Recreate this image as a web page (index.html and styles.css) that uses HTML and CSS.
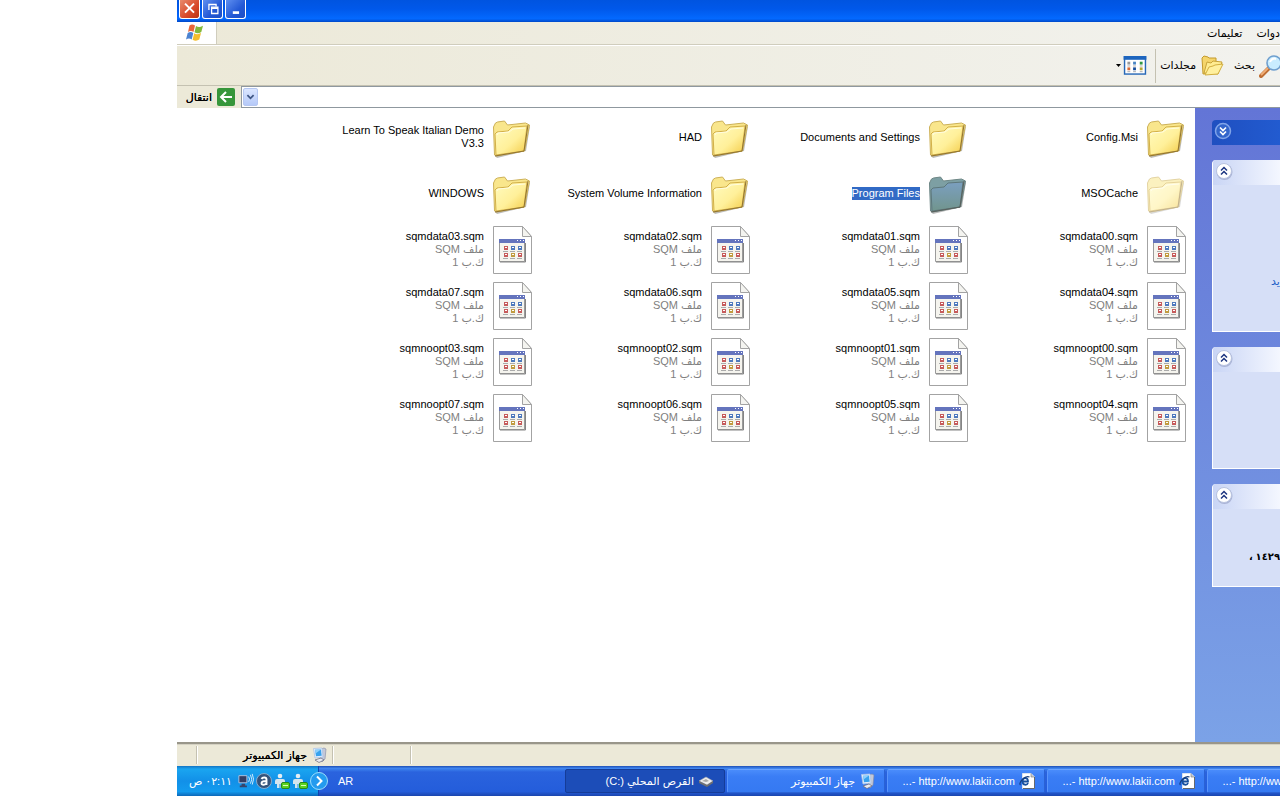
FILE: index.html
```html
<!DOCTYPE html>
<html lang="ar">
<head>
<meta charset="utf-8">
<title>القرص المحلي (C:)</title>
<link rel="stylesheet" href="styles.css">
</head>
<body>
<svg class="defs" aria-hidden="true">
  <defs>
    <linearGradient id="gold" x1="0" y1="0" x2="1" y2="1"><stop offset="0" stop-color="#fffbc0"/><stop offset=".55" stop-color="#fff09a"/><stop offset="1" stop-color="#f3ca45"/></linearGradient>
    <linearGradient id="steel" x1="0" y1="0" x2="0" y2="1"><stop offset="0" stop-color="#7b9fc0"/><stop offset="1" stop-color="#71958d"/></linearGradient>
    <symbol id="folder" viewBox="0 0 48 48">
      <path d="M7 42l28-5 6-24 1-1-4 25-29 7z" fill="#777" opacity=".5"/>
      <path d="M5.500 13l2-4 2-1 7-1 3 4 18-2 4 2-5 26-28 5-2-1z" fill="#f9e68c" stroke="#cdb158"/>
      <path d="M8 41L7 20l2-2 11-1 4-4 15-1-3 25z" fill="url(#gold)" stroke="#d3b048"/>
      <path d="M9 21l1-2 11-1 4-3 12-1" fill="none" stroke="#fffde0"/>
      <path d="M7 42l29-5 4-26" fill="none" stroke="#8f7332"/>
    </symbol>
    <symbol id="folder-selected" viewBox="0 0 48 48">
      <path d="M7 42l28-5 6-24 1-1-4 25-29 7z" fill="#888" opacity=".6"/>
      <path d="M5.500 13l2-4 2-1 7-1 3 4 18-2 4 2-5 26-28 5-2-1z" fill="#7d9fa3" stroke="#6d8685"/>
      <path d="M8 41L7 20l2-2 11-1 4-4 15-1-3 25z" fill="url(#steel)" stroke="#5d777b"/>
      <path d="M7 42l29-5 4-26" fill="none" stroke="#59605b"/>
    </symbol>
    <symbol id="file" viewBox="0 0 48 48">
      <path d="M5.500 .5h29l9 10v37h-38z" fill="#fff" stroke="#a3a3a3"/>
      <path d="M34.500 .5v10h9z" fill="#f4f4f0" stroke="#a3a3a3"/>
      <path d="M11.500 13.500h25v22h-25z" fill="#f5f4ee" stroke="#9b9b9b"/>
      <path d="M11 13h26v4H11z" fill="#6474bd"/>
      <path d="M29 14h1v1h-1zM32 14h1v1h-1zM35 14h1v1h-1z" fill="#fff"/>
      <path d="M12 36h25.500V17" fill="none" stroke="#858585"/>
      <g fill="#c65b5b"><path d="M16 20h4v4h-4zM16 27h4v4h-4zM30 27h4v4h-4z"/></g>
      <g fill="#4e79bd"><path d="M23 20h4v4h-4zM30 20h4v4h-4z"/></g><path d="M23 27h4v4h-4z" fill="#c19b3f"/>
      <path d="M17 21h2v1h-2zM24 21h2v1h-2zM31 21h2v1h-2zM17 28h2v1h-2zM24 28h2v1h-2zM31 28h2v1h-2z" fill="#fff"/>
      <path d="M15 25.500h5m2 0h5m2 0h5M15 32.500h5m2 0h5m2 0h5" stroke="#aaa"/>
    </symbol>
    <symbol id="computer" viewBox="0 0 16 16">
      <path d="M10 2l3-1 2 1-1 10-3 3-2-2z" fill="#c3c8d8" stroke="#7f88a5" stroke-width=".6"/>
      <path d="M2.500 1.500L11 1l1 9-8 1z" fill="#e5eefb" stroke="#a9c3e6" stroke-width=".8"/>
      <path d="M4 2.800l6-.4.700 6.300-5.700.6z" fill="#37a2ee"/><path d="M4 2.800l6-.4-5.500 4z" fill="#8fd0fb"/>
      <path d="M4 13l6-2 3 2-5 2.500z" fill="#e9ebf2" stroke="#667" stroke-width=".7"/>
    </symbol>
    <symbol id="drive" viewBox="0 0 16 16">
      <path d="M1 8l7-4 7 4-6 4z" fill="#eee" stroke="#aaa" stroke-width=".6"/><path d="M1 8v2l8 4v-2zM9 12l6-4v2l-6 4z" fill="#707070"/><path d="M4 8l4-2 3 2-3 1z" fill="#aaa"/>
    </symbol>
    <symbol id="ie" viewBox="0 0 16 16">
      <path d="M3.500 .5H12l3.500 3.500v11.500h-12z" fill="#fff" stroke="#dbe2ef"/><path d="M12 .5V4h3.500" fill="#ccc" stroke="#777" stroke-width=".6"/><path d="M15.500 4v11.500H4" fill="none" stroke="#333" stroke-width=".7"/>
      <path d="M3.500 8.500H9c0-4.500-5.500-4.500-5.500 0 0 4 4.500 4 5.500 1.500" fill="none" stroke="#174f9e" stroke-width="1.800"/><path d="M1.500 12C-1 10 6 2 10.500 4" fill="none" stroke="#143c7d" stroke-width="1.200"/>
    </symbol>
    <symbol id="up" viewBox="0 0 18 18">
      <circle cx="9.500" cy="10" r="8" fill="#7983ac" opacity=".45"/><circle cx="9" cy="9" r="7.500" fill="#fff" stroke="#b8c3df"/>
      <path d="M6 8.500l3-3 3 3M6 12.500l3-3 3 3" fill="none" stroke="#1d3580" stroke-width="1.500"/>
    </symbol>
    <symbol id="down" viewBox="0 0 18 18">
      <circle cx="9" cy="9" r="7.500" fill="#3265cb" stroke="#80a4e9" stroke-width="1.500"/><path d="M6 5.500l3 3 3-3M6 9.500l3 3 3-3" fill="none" stroke="#fff" stroke-width="1.700"/>
    </symbol>
    <symbol id="buddy" viewBox="0 0 16 16">
      <circle cx="6" cy="3" r="2.300" fill="#e4eef4"/><path d="M3 6h6q2 0 2 2v3H9v4H6.500v-4h-1v4H3v-4H1V8q0-2 2-2z" fill="#d5e5ee"/><rect x="7.500" y="9.500" width="8" height="6" rx="1.500" fill="#5bd323" stroke="#258b19"/><path d="M9 12.500h5" stroke="#d9ffb5"/>
    </symbol>
  </defs>
</svg>

<main class="window">
  <header class="titlebar">
    <button class="caption close" aria-label="إغلاق"><svg viewBox="0 0 20 20"><path d="M5 4l10 10M15 4L5 14" stroke="#fff" stroke-width="2.200"/></svg></button>
    <button class="caption" aria-label="استعادة"><svg viewBox="0 0 20 20"><path d="M6 11V5h8v2M9 8h7v7H9z" fill="none" stroke="#fff" stroke-width="1.400"/><path d="M9 9h7" stroke="#fff" stroke-width="2"/></svg></button>
    <button class="caption" aria-label="تصغير"><svg viewBox="0 0 20 20"><path d="M7 14h7" stroke="#fff" stroke-width="3"/></svg></button>
  </header>

  <nav class="menubar">
    <div class="flag"><svg viewBox="0 0 20 20">
      <path d="M4.500 2.500c2-1.600 3.500-1.300 5.500 0L8.500 9C6.500 7.600 5 7.600 3 9z" fill="#e8663a"/>
      <path d="M11 3c2 1.300 4 1.300 7-.3L16.300 9c-2.500 1.500-4.500 1.500-6.800.3z" fill="#83b93a"/>
      <path d="M2.700 10C5 8.700 6.500 8.800 8.300 10l-1.600 6.500C5 15.200 3 15.200 1 16.500z" fill="#4b83d1"/>
      <path d="M9.200 10.300c2.300 1.300 4.300 1 6.800-.3l-1.700 6.600c-2.300 1.500-4.500 1.400-6.700.2z" fill="#f4bd2c"/></svg></div>
    <div class="menus" dir="rtl"><button class="plain">دوات</button><button class="plain">تعليمات</button></div>
  </nav>

  <div class="toolbar" dir="rtl">
    <button class="plain tool search"><svg viewBox="0 0 24 24"><path d="M2 22l8-8" stroke="#bd6d32" stroke-width="4" stroke-linecap="round"/><path d="M2 21l7-7" stroke="#f0ad76" stroke-width="2"/><circle cx="15" cy="9" r="7" fill="#c9edff" stroke="#6f9fce" stroke-width="1.600"/><path d="M11 8c1-3 4-4 6-3" fill="none" stroke="#fff" stroke-width="2"/></svg><span>بحث</span></button>
    <button class="plain tool"><svg viewBox="0 0 24 24"><path d="M2 4l2-2 4 1 1 1h7v4l-3 11-10 1z" fill="#f5d56b" stroke="#c49a2c"/><path d="M4 19L7 8l4 1 2-2 9 1-4 12z" fill="#ffec91" stroke="#c8a33a"/><path d="M5 21l4-8 4-1 2-1 8-1-5 10z" fill="#fff09e" stroke="#d2ae3e"/></svg><span>مجلدات</span></button>
    <button class="plain views" aria-label="طرق العرض"><svg class="view-icon" viewBox="0 0 24 20"><rect x="1" y="1" width="22" height="18" fill="#fff" stroke="#2768b7" stroke-width="1.500"/><path d="M0 0h24v4H0z" fill="#1d65be"/><path d="M4 6h3v3H4z" fill="#999"/><path d="M10 6h3v3h-3z" fill="#4985c4"/><path d="M17 6h3v3h-3z" fill="#329743"/><path d="M4 12h3v3H4z" fill="#d96a35"/><path d="M10 12h3v3h-3z" fill="#174d9b"/><path d="M17 12h3v3h-3z" fill="#b5a638"/><path d="M4 10.500h3m3 0h3m4 0h3M4 16.500h3m3 0h3m4 0h3" stroke="#aaa"/></svg><svg class="caret" viewBox="0 0 5 3"><path d="M0 0h5L2.500 3z"/></svg></button>
  </div>

  <div class="address">
    <button class="plain go"><span>انتقال</span><svg viewBox="0 0 18 18"><rect width="18" height="18" rx="2" fill="#36963b"/><path d="M15 9H4M9 4L4 9l5 5" fill="none" stroke="#fff" stroke-width="2"/></svg></button>
    <div class="field"><button class="drop" aria-label="عرض العناوين"><svg viewBox="0 0 14 18"><path d="M3.500 7L7 10.500 10.500 7" fill="none" stroke="#3f5684" stroke-width="2"/></svg></button><input type="text" aria-label="العنوان" dir="rtl"></div>
  </div>

  <div class="content">
    <section class="files" dir="rtl" aria-label="الملفات">
      <div class="item"><svg><use href="#folder"/></svg><p><bdi>Config.Msi</bdi></p></div>
      <div class="item"><svg><use href="#folder"/></svg><p><bdi>Documents and Settings</bdi></p></div>
      <div class="item"><svg><use href="#folder"/></svg><p><bdi>HAD</bdi></p></div>
      <div class="item"><svg><use href="#folder"/></svg><p><bdi>Learn To Speak Italian Demo V3.3</bdi></p></div>
      <div class="item hidden-folder"><svg><use href="#folder"/></svg><p><bdi>MSOCache</bdi></p></div>
      <div class="item selected"><svg><use href="#folder-selected"/></svg><p><bdi>Program Files</bdi></p></div>
      <div class="item"><svg><use href="#folder"/></svg><p><bdi>System Volume Information</bdi></p></div>
      <div class="item"><svg><use href="#folder"/></svg><p><bdi>WINDOWS</bdi></p></div>
      <div class="item"><svg><use href="#file"/></svg><p><bdi>sqmdata00.sqm</bdi><small>ملف SQM</small><small>ك.ب 1</small></p></div>
      <div class="item"><svg><use href="#file"/></svg><p><bdi>sqmdata01.sqm</bdi><small>ملف SQM</small><small>ك.ب 1</small></p></div>
      <div class="item"><svg><use href="#file"/></svg><p><bdi>sqmdata02.sqm</bdi><small>ملف SQM</small><small>ك.ب 1</small></p></div>
      <div class="item"><svg><use href="#file"/></svg><p><bdi>sqmdata03.sqm</bdi><small>ملف SQM</small><small>ك.ب 1</small></p></div>
      <div class="item"><svg><use href="#file"/></svg><p><bdi>sqmdata04.sqm</bdi><small>ملف SQM</small><small>ك.ب 1</small></p></div>
      <div class="item"><svg><use href="#file"/></svg><p><bdi>sqmdata05.sqm</bdi><small>ملف SQM</small><small>ك.ب 1</small></p></div>
      <div class="item"><svg><use href="#file"/></svg><p><bdi>sqmdata06.sqm</bdi><small>ملف SQM</small><small>ك.ب 1</small></p></div>
      <div class="item"><svg><use href="#file"/></svg><p><bdi>sqmdata07.sqm</bdi><small>ملف SQM</small><small>ك.ب 1</small></p></div>
      <div class="item"><svg><use href="#file"/></svg><p><bdi>sqmnoopt00.sqm</bdi><small>ملف SQM</small><small>ك.ب 1</small></p></div>
      <div class="item"><svg><use href="#file"/></svg><p><bdi>sqmnoopt01.sqm</bdi><small>ملف SQM</small><small>ك.ب 1</small></p></div>
      <div class="item"><svg><use href="#file"/></svg><p><bdi>sqmnoopt02.sqm</bdi><small>ملف SQM</small><small>ك.ب 1</small></p></div>
      <div class="item"><svg><use href="#file"/></svg><p><bdi>sqmnoopt03.sqm</bdi><small>ملف SQM</small><small>ك.ب 1</small></p></div>
      <div class="item"><svg><use href="#file"/></svg><p><bdi>sqmnoopt04.sqm</bdi><small>ملف SQM</small><small>ك.ب 1</small></p></div>
      <div class="item"><svg><use href="#file"/></svg><p><bdi>sqmnoopt05.sqm</bdi><small>ملف SQM</small><small>ك.ب 1</small></p></div>
      <div class="item"><svg><use href="#file"/></svg><p><bdi>sqmnoopt06.sqm</bdi><small>ملف SQM</small><small>ك.ب 1</small></p></div>
      <div class="item"><svg><use href="#file"/></svg><p><bdi>sqmnoopt07.sqm</bdi><small>ملف SQM</small><small>ك.ب 1</small></p></div>
    </section>
    <aside class="tasks">
      <section class="card primary"><button class="card-head" aria-label="توسيع"><svg><use href="#down"/></svg></button></section>
      <section class="card"><button class="card-head" aria-label="طي"><svg><use href="#up"/></svg></button><div class="card-body file-tasks"><a href="#" dir="rtl">يد</a></div></section>
      <section class="card"><button class="card-head" aria-label="طي"><svg><use href="#up"/></svg></button><div class="card-body places"></div></section>
      <section class="card"><button class="card-head" aria-label="طي"><svg><use href="#up"/></svg></button><div class="card-body details"><span dir="rtl">١٤٢٩ ،</span></div></section>
    </aside>
  </div>

  <footer class="status">
    <div class="pane grip"></div>
    <div class="pane place"><span dir="rtl">جهاز الكمبيوتر</span><svg><use href="#computer"/></svg></div>
    <div class="pane blank"></div>
  </footer>

  <footer class="taskbar">
    <div class="tray">
      <time dir="rtl">٠٢:١١ ص</time>
      <svg viewBox="0 0 18 16"><path d="M1 2h9v8H1z" fill="#333d63" stroke="#b9c9e4"/><path d="M4 11h4v2h2v2H2v-2h2z" fill="#37436b"/><path d="M12 3q2 3 0 6m2-8q3 5 0 10m2-11q3 6 0 12" fill="none" stroke="#e4f5ff"/></svg>
      <svg viewBox="0 0 16 16"><circle cx="8" cy="8" r="7.500" fill="#34537b" stroke="#9eb7d2" stroke-width=".8"/><path d="M5.500 6c1-2 5-2 5 .5V12M10.500 8c-3 0-5 .3-5 2.200 0 2 4 2.200 5 0" fill="none" stroke="#fff" stroke-width="1.900"/></svg>
      <svg viewBox="0 0 16 16"><use href="#buddy"/></svg>
      <svg viewBox="0 0 16 16"><use href="#buddy"/></svg>
    </div>
    <button class="plain expand" aria-label="إظهار الرموز المخفية"><svg viewBox="0 0 20 20"><circle cx="10" cy="10" r="8.500" fill="#249bef" stroke="#9bddfb"/><path d="M8 5.500l4.500 4.500L8 14.500" fill="none" stroke="#fff" stroke-width="2"/></svg></button>
    <span class="lang">AR</span>
    <div class="apps">
      <button class="app active"><span dir="rtl">القرص المحلي <bdi dir="ltr">(C:)</bdi></span><svg><use href="#drive"/></svg></button>
      <button class="app"><span dir="rtl">جهاز الكمبيوتر</span><svg><use href="#computer"/></svg></button>
      <button class="app"><span>...- http://www.lakii.com</span><svg><use href="#ie"/></svg></button>
      <button class="app"><span>...- http://www.lakii.com</span><svg><use href="#ie"/></svg></button>
      <button class="app"><span>...- http://www.lakii.com</span><svg><use href="#ie"/></svg></button>
    </div>
  </footer>
</main>
</body>
</html>
```
FILE: styles.css
```css
* { box-sizing: border-box; }
body {
  margin: 0;
  background: #fff;
  color: #000;
  font: 11px/13px "Liberation Sans", "DejaVu Sans", sans-serif;
  overflow: hidden;
}
button, input { font: inherit; color: inherit; margin: 0; }
svg { display: block; flex: none; }
.defs { position: absolute; width: 0; height: 0; }
.plain { border: 0; background: none; padding: 0; }

.window {
  display: flex;
  flex-direction: column;
  height: calc(100vh - 4px);
  margin-left: 177px;
}
.titlebar {
  flex: none;
  display: flex;
  gap: 2px;
  height: 22px;
  padding-left: 2px;
  background: linear-gradient(#0054e0, #0058ea 40%, #0369ff 85%, #0048c8);
}
.caption {
  width: 21px;
  height: 19px;
  padding: 0;
  border: 1px solid #fff;
  border-top: 0;
  border-radius: 0 0 3px 3px;
  background: linear-gradient(135deg, #5f8ff0, #2358d5 60%, #1e4fc4);
}
.caption.close { background: linear-gradient(135deg, #e88a6c, #d8492a 60%, #b93415); }
.caption svg { width: 19px; height: 18px; }

.menubar {
  flex: none;
  display: flex;
  height: 23px;
  background: linear-gradient(to right, #ece9d8, #f2f2ee);
  border-bottom: 1px solid #d0cdbd;
}
.flag {
  width: 40px;
  padding: 1px 0 0 8px;
  background: #fff;
  border-right: 1px solid #d0cdbd;
}
.flag svg { width: 20px; height: 20px; }
.menus { flex: 1; display: flex; gap: 14px; }
.menus, .toolbar, .go, .place { text-shadow: 0 0 0 #000; }

.toolbar {
  flex: none;
  display: flex;
  align-items: center;
  height: 41px;
  background: linear-gradient(to right, #ece9d8, #f2f2ee);
  border-top: 1px solid #fff;
  border-bottom: 1px solid #c4c1b1;
}
.tool { display: flex; align-items: center; gap: 4px; margin-left: 4px; }
.tool svg { width: 24px; height: 24px; }
.tool.search { margin-left: 10px; }
.search svg { margin-right: -3px; }
.views {
  display: flex;
  align-items: center;
  gap: 2px;
  height: 34px;
  padding-right: 8px;
  border-right: 1px solid #c4c1b1;
}
.view-icon { width: 24px; height: 19px; }
.caret { width: 5px; height: 3px; }

.address {
  flex: none;
  display: flex;
  height: 22px;
  background: #ece9d8;
}
.go {
  display: flex;
  align-items: center;
  justify-content: flex-end;
  gap: 5px;
  width: 64px;
  padding-right: 6px;
}
.go svg { width: 18px; height: 18px; }
.field {
  flex: 1;
  display: flex;
  padding: 1px;
  background: #fff;
  border: 1px solid #8f989f;
  border-right: 0;
}
.field input { flex: 1; border: 0; outline: 0; background: none; }
.drop {
  width: 15px;
  padding: 0;
  border: 1px solid #b5c7f2;
  border-radius: 2px;
  background: linear-gradient(#dbe6ff, #b5c9f8);
}
.drop svg { width: 13px; height: 16px; }

.content { flex: 1; display: flex; min-height: 0; }
.files {
  flex: 1;
  display: grid;
  grid-template-columns: repeat(auto-fill, 218px);
  grid-auto-rows: 48px;
  row-gap: 8px;
  align-content: start;
  padding: 6px 5px 6px 100px;
}
.item { display: flex; align-items: center; gap: 4px; }
.item svg { width: 48px; height: 48px; }
.item p { margin: 0 0 2px; width: 144px; text-align: right; }
.item small { display: block; font-size: 11px; color: #808080; }
.item bdi { display: inline-block; text-align: right; vertical-align: top; }
.selected bdi { background: #316ac5; color: #fff; }
.hidden-folder svg { opacity: .55; }

.tasks {
  flex: none;
  display: flex;
  flex-direction: column;
  gap: 15px;
  width: 85px;
  padding: 12px 0 0 17px;
  background: linear-gradient(#6375d6, #7ba2e7);
}
.card {
  border: 1px solid #fff;
  border-width: 0 0 1px 1px;
  border-radius: 4px 0 0 0;
  background: #d6dff7;
  overflow: hidden;
}
.card-head {
  display: flex;
  align-items: flex-start;
  width: 100%;
  height: 25px;
  padding: 2px;
  border: 0;
  background: linear-gradient(to right, #c9d5f5, #f4f7ff);
}
.card-head svg { width: 18px; height: 18px; }
.primary { border: 0; }
.primary .card-head { background: linear-gradient(to right, #1f4fc0, #225bd0); }
.card-body { display: flex; white-space: nowrap; }
.file-tasks { height: 146px; padding: 90px 0 0 58px; }
.file-tasks a { color: #215dc6; text-decoration: none; }
.places { height: 96px; }
.details { height: 77px; padding: 41px 0 0 36px; font-weight: bold; font-size: 10px; }

.status {
  flex: none;
  display: flex;
  height: 24px;
  background: #ece9d8;
  border-top: 2px solid #99968a;
  box-shadow: inset 0 1px #d5d2c3;
}
.pane { margin: 2px 0 2px; border-right: 1px solid #c4c1b1; box-shadow: 1px 0 #fff; }
.grip { width: 20px; }
.place {
  display: flex;
  align-items: center;
  justify-content: flex-end;
  gap: 4px;
  width: 136px;
  padding-right: 5px;
}
.place svg { width: 16px; height: 16px; }
.blank { width: 78px; }

.taskbar {
  flex: none;
  display: flex;
  align-items: center;
  height: 30px;
  background: linear-gradient(#1f4fb5, #3f86f0 8%, #2a63de 20%, #245ddb 85%, #1b45ad);
  color: #fff;
}
.tray {
  display: flex;
  align-items: center;
  align-self: stretch;
  justify-content: flex-end;
  gap: 2px;
  width: 142px;
  padding-right: 10px;
  background: linear-gradient(#1374c4, #1aa5f0 10%, #1290e8 50%, #139bee 85%, #0d68b8);
  border-right: 1px solid #1042af;
}
.tray svg { width: 16px; height: 16px; }
.tray time { font-size: 11px; margin-right: 4px; }
.expand { margin-left: -10px; }
.expand svg { width: 20px; height: 20px; }
.lang { margin-left: 9px; }
.apps {
  display: flex;
  gap: 2px;
  width: 715px;
  margin-left: auto;
  overflow: hidden;
}
.app {
  flex: none;
  display: flex;
  align-items: center;
  justify-content: flex-end;
  gap: 4px;
  width: 158px;
  height: 24px;
  padding: 0 9px;
  border: 1px solid #2a62d4;
  border-top-color: #6ba3ff;
  border-left-color: #5a95fc;
  border-radius: 2px;
  background: linear-gradient(#4a8cfb, #3a7df5 30%, #3579f2);
}
.app.active { width: 160px; background: #1c4db8; border-color: #153c98; padding-right: 10px; }
.app svg { width: 16px; height: 16px; }
```
